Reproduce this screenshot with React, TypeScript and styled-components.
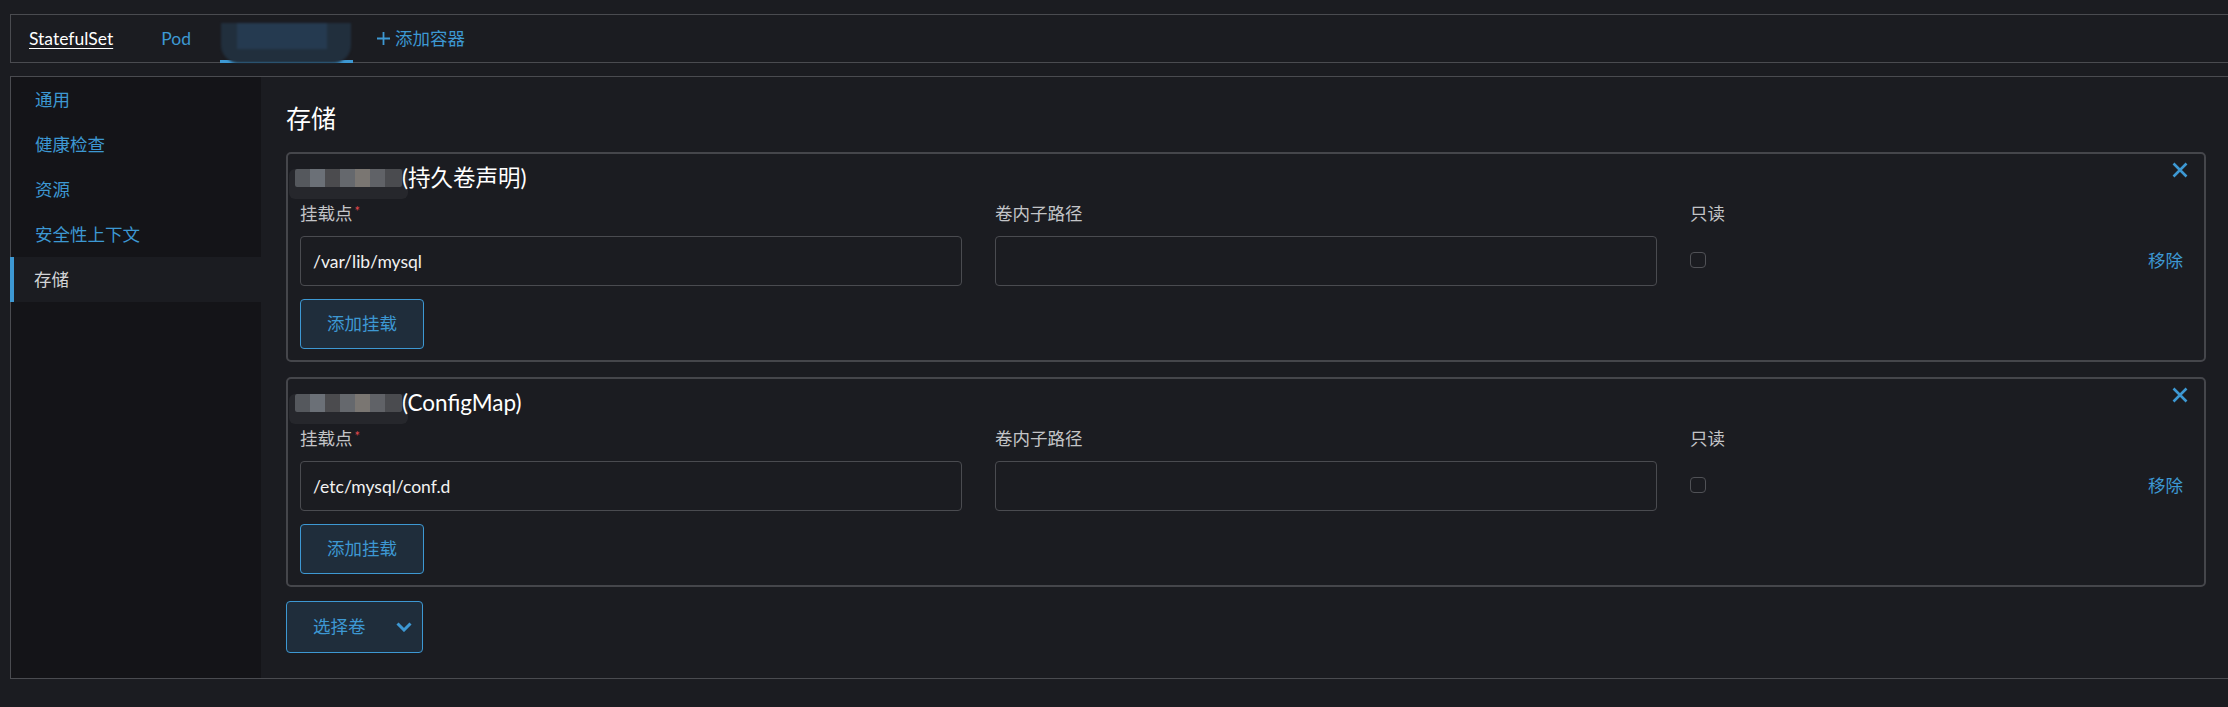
import React from 'react';
import styled, { createGlobalStyle } from 'styled-components';

const GlobalStyle = createGlobalStyle`
  html, body {
    margin: 0;
    padding: 0;
    background: #1b1c21;
    overflow: hidden;
  }
  body {
    font-family: Lato, "Noto Sans CJK SC", sans-serif;
    font-size: 17.5px;
    color: #c3c4c7;
  }
  * { box-sizing: border-box; }
`;

const BLUE = '#3d98d3';

const Page = styled.div`
  width: 2228px;
  height: 707px;
  padding: 14px 0 0 10px;
  display: flex;
  flex-direction: column;
  gap: 13px;
`;

const TabBar = styled.nav`
  width: calc(100% + 4px);
  height: 49px;
  border: 1px solid #4a4b50;
  display: flex;
  align-items: stretch;
  padding-left: 18px;
`;

const Tab = styled.a<{ $kind?: 'current' | 'link' }>`
  display: flex;
  align-items: center;
  text-decoration: none;
  line-height: 22px;
  color: ${(p) => (p.$kind === 'current' ? '#ffffff' : BLUE)};
  & > span {
    text-decoration: ${(p) => (p.$kind === 'current' ? 'underline' : 'none')};
    text-underline-offset: 3px;
  }
`;

const ActiveTab = styled.a`
  display: flex;
  align-items: flex-start;
  justify-content: center;
  width: 133px;
  margin-bottom: -1px;
  border-bottom: 3px solid ${BLUE};
`;

const RedactedTab = styled.span`
  display: block;
  width: 130px;
  height: 40px;
  margin-top: 8px;
  background:
    linear-gradient(90deg, transparent 0 16px, #253a50 16px 106px, transparent 106px) top / 100% 26px no-repeat,
    #212f3d;
  border-radius: 0 0 18px 18px;
  filter: blur(1px);
`;

const AddTab = styled.a`
  display: flex;
  align-items: center;
  gap: 5px;
  color: ${BLUE};
  line-height: 22px;
`;

const Panel = styled.div`
  width: calc(100% + 4px);
  height: 603px;
  border: 1px solid #4a4b50;
  display: flex;
`;

const Sidebar = styled.ul`
  width: 250px;
  margin: 0;
  padding: 0;
  list-style: none;
  background: #141418;
  display: flex;
  flex-direction: column;
`;

const SideItem = styled.li<{ $active?: boolean }>`
  height: 45px;
  display: flex;
  align-items: center;
  padding-left: ${(p) => (p.$active ? '20px' : '24px')};
  border-left: ${(p) => (p.$active ? `4px solid ${BLUE}` : 'none')};
  margin-left: ${(p) => (p.$active ? '-1px' : '0')};
  background: ${(p) => (p.$active ? '#1b1c21' : 'transparent')};
  color: ${(p) => (p.$active ? '#d2d3d6' : BLUE)};
  line-height: 22px;
`;

const Content = styled.main`
  flex: 1;
  padding: 25px 25px 0 25px;
  display: flex;
  flex-direction: column;
  align-items: stretch;
`;

const Heading = styled.h2`
  margin: 0 0 18px;
  font-size: 25px;
  line-height: 32px;
  font-weight: 400;
  color: #ffffff;
`;

const Cards = styled.div`
  display: flex;
  flex-direction: column;
  gap: 15px;
`;

const Card = styled.section`
  border: 2px solid #45464b;
  border-radius: 5px;
  padding: 9px 16px 11px 12px;
  display: flex;
  flex-direction: column;
`;

const CardHeader = styled.header`
  height: 30px;
  margin-bottom: 10px;
  display: flex;
  justify-content: space-between;
  align-items: flex-start;
`;

const CardTitle = styled.h3`
  margin: 0;
  font-size: 22.5px;
  line-height: 30px;
  font-weight: 400;
  color: #ffffff;
  display: flex;
  align-items: center;
`;

const RedactedName = styled.span`
  display: inline-block;
  width: 107px;
  height: 18px;
  margin-left: -5px;
  background: linear-gradient(
    90deg,
    #55585d 0 15px,
    #6b7077 15px 30px,
    #4b4b4e 30px 45px,
    #65686d 45px 60px,
    #7a7672 60px 75px,
    #606267 75px 90px,
    #4a4b4f 90px 107px
  );
  box-shadow: 0 6px 0 6px #26272c;
  border-radius: 2px;
`;

const CloseButton = styled.button`
  margin-top: -1px;
  padding: 0;
  border: 0;
  background: none;
  width: 16px;
  height: 16px;
  display: flex;
  cursor: pointer;
`;

const Fields = styled.div`
  display: grid;
  grid-template-columns: 662px 662px 1fr auto;
  grid-template-rows: 22px 50px;
  column-gap: 33px;
  row-gap: 11px;
`;

const Label = styled.label`
  font-size: 17.5px;
  line-height: 22px;
  color: #c3c4c7;
`;

const Required = styled.span`
  color: #e5484d;
  font-size: 13px;
  vertical-align: top;
  margin-left: 2px;
  line-height: 16px;
`;

const TextInput = styled.input`
  height: 50px;
  width: 100%;
  background: transparent;
  border: 1px solid #4a4b50;
  border-radius: 4px;
  padding: 0 12px;
  color: #f2f2f2;
  font-family: Lato, "Noto Sans CJK SC", sans-serif;
  font-size: 17.5px;
  outline: none;
`;

const CheckCell = styled.div`
  display: flex;
  align-items: center;
`;

const Checkbox = styled.span`
  width: 16px;
  height: 16px;
  border: 1px solid #505156;
  border-radius: 4px;
  margin-top: -3px;
`;

const RemoveLink = styled.a`
  align-self: center;
  justify-self: end;
  margin-right: 5px;
  color: ${BLUE};
  line-height: 22px;
`;

const OutlineButton = styled.button`
  align-self: flex-start;
  margin-top: 13px;
  height: 50px;
  padding: 0 26px;
  background: #1f2d3b;
  border: 1px solid ${BLUE};
  border-radius: 4px;
  color: ${BLUE};
  font-family: Lato, "Noto Sans CJK SC", sans-serif;
  font-size: 17.5px;
  line-height: 22px;
`;

const SelectButton = styled(OutlineButton)`
  margin-top: 14px;
  width: 137px;
  height: 52px;
  padding: 0 10px 0 26px;
  display: flex;
  align-items: center;
  justify-content: space-between;
`;

const XIcon = () => (
  <svg width="16" height="16" viewBox="0 0 16 16">
    <path d="M1.5 1.5 L14.5 14.5 M14.5 1.5 L1.5 14.5" stroke={BLUE} strokeWidth="2.6" strokeLinecap="butt" fill="none" />
  </svg>
);

const PlusIcon = () => (
  <svg width="13" height="13" viewBox="0 0 13 13">
    <path d="M6.5 0 V13 M0 6.5 H13" stroke={BLUE} strokeWidth="1.8" fill="none" />
  </svg>
);

const Chevron = () => (
  <svg width="16" height="10" viewBox="0 0 16 10">
    <path d="M1.5 1.5 L8 8 L14.5 1.5" stroke={BLUE} strokeWidth="3" fill="none" strokeLinejoin="miter" />
  </svg>
);

type Mount = { kind: string; path: string };

const mounts: Mount[] = [
  { kind: '(持久卷声明)', path: '/var/lib/mysql' },
  { kind: '(ConfigMap)', path: '/etc/mysql/conf.d' },
];

const VolumeCard = ({ m }: { m: Mount }) => (
  <Card>
    <CardHeader>
      <CardTitle>
        <RedactedName aria-hidden="true" />
        {m.kind}
      </CardTitle>
      <CloseButton aria-label="close">
        <XIcon />
      </CloseButton>
    </CardHeader>
    <Fields>
      <Label>
        挂载点<Required>*</Required>
      </Label>
      <Label>卷内子路径</Label>
      <Label>只读</Label>
      <span />
      <TextInput defaultValue={m.path} />
      <TextInput defaultValue="" />
      <CheckCell>
        <Checkbox />
      </CheckCell>
      <RemoveLink>移除</RemoveLink>
    </Fields>
    <OutlineButton>添加挂载</OutlineButton>
  </Card>
);

export default function App() {
  return (
    <>
      <GlobalStyle />
      <Page>
        <TabBar>
          <Tab $kind="current">
            <span>StatefulSet</span>
          </Tab>
          <Tab $kind="link" style={{ marginLeft: 48 }}>
            <span>Pod</span>
          </Tab>
          <ActiveTab style={{ marginLeft: 29 }}>
            <RedactedTab aria-hidden="true" />
          </ActiveTab>
          <AddTab style={{ marginLeft: 24 }}>
            <PlusIcon />
            添加容器
          </AddTab>
        </TabBar>
        <Panel>
          <Sidebar>
            <SideItem>通用</SideItem>
            <SideItem>健康检查</SideItem>
            <SideItem>资源</SideItem>
            <SideItem>安全性上下文</SideItem>
            <SideItem $active>存储</SideItem>
          </Sidebar>
          <Content>
            <Heading>存储</Heading>
            <Cards>
              {mounts.map((m) => (
                <VolumeCard key={m.path} m={m} />
              ))}
            </Cards>
            <SelectButton>
              选择卷
              <Chevron />
            </SelectButton>
          </Content>
        </Panel>
      </Page>
    </>
  );
}
